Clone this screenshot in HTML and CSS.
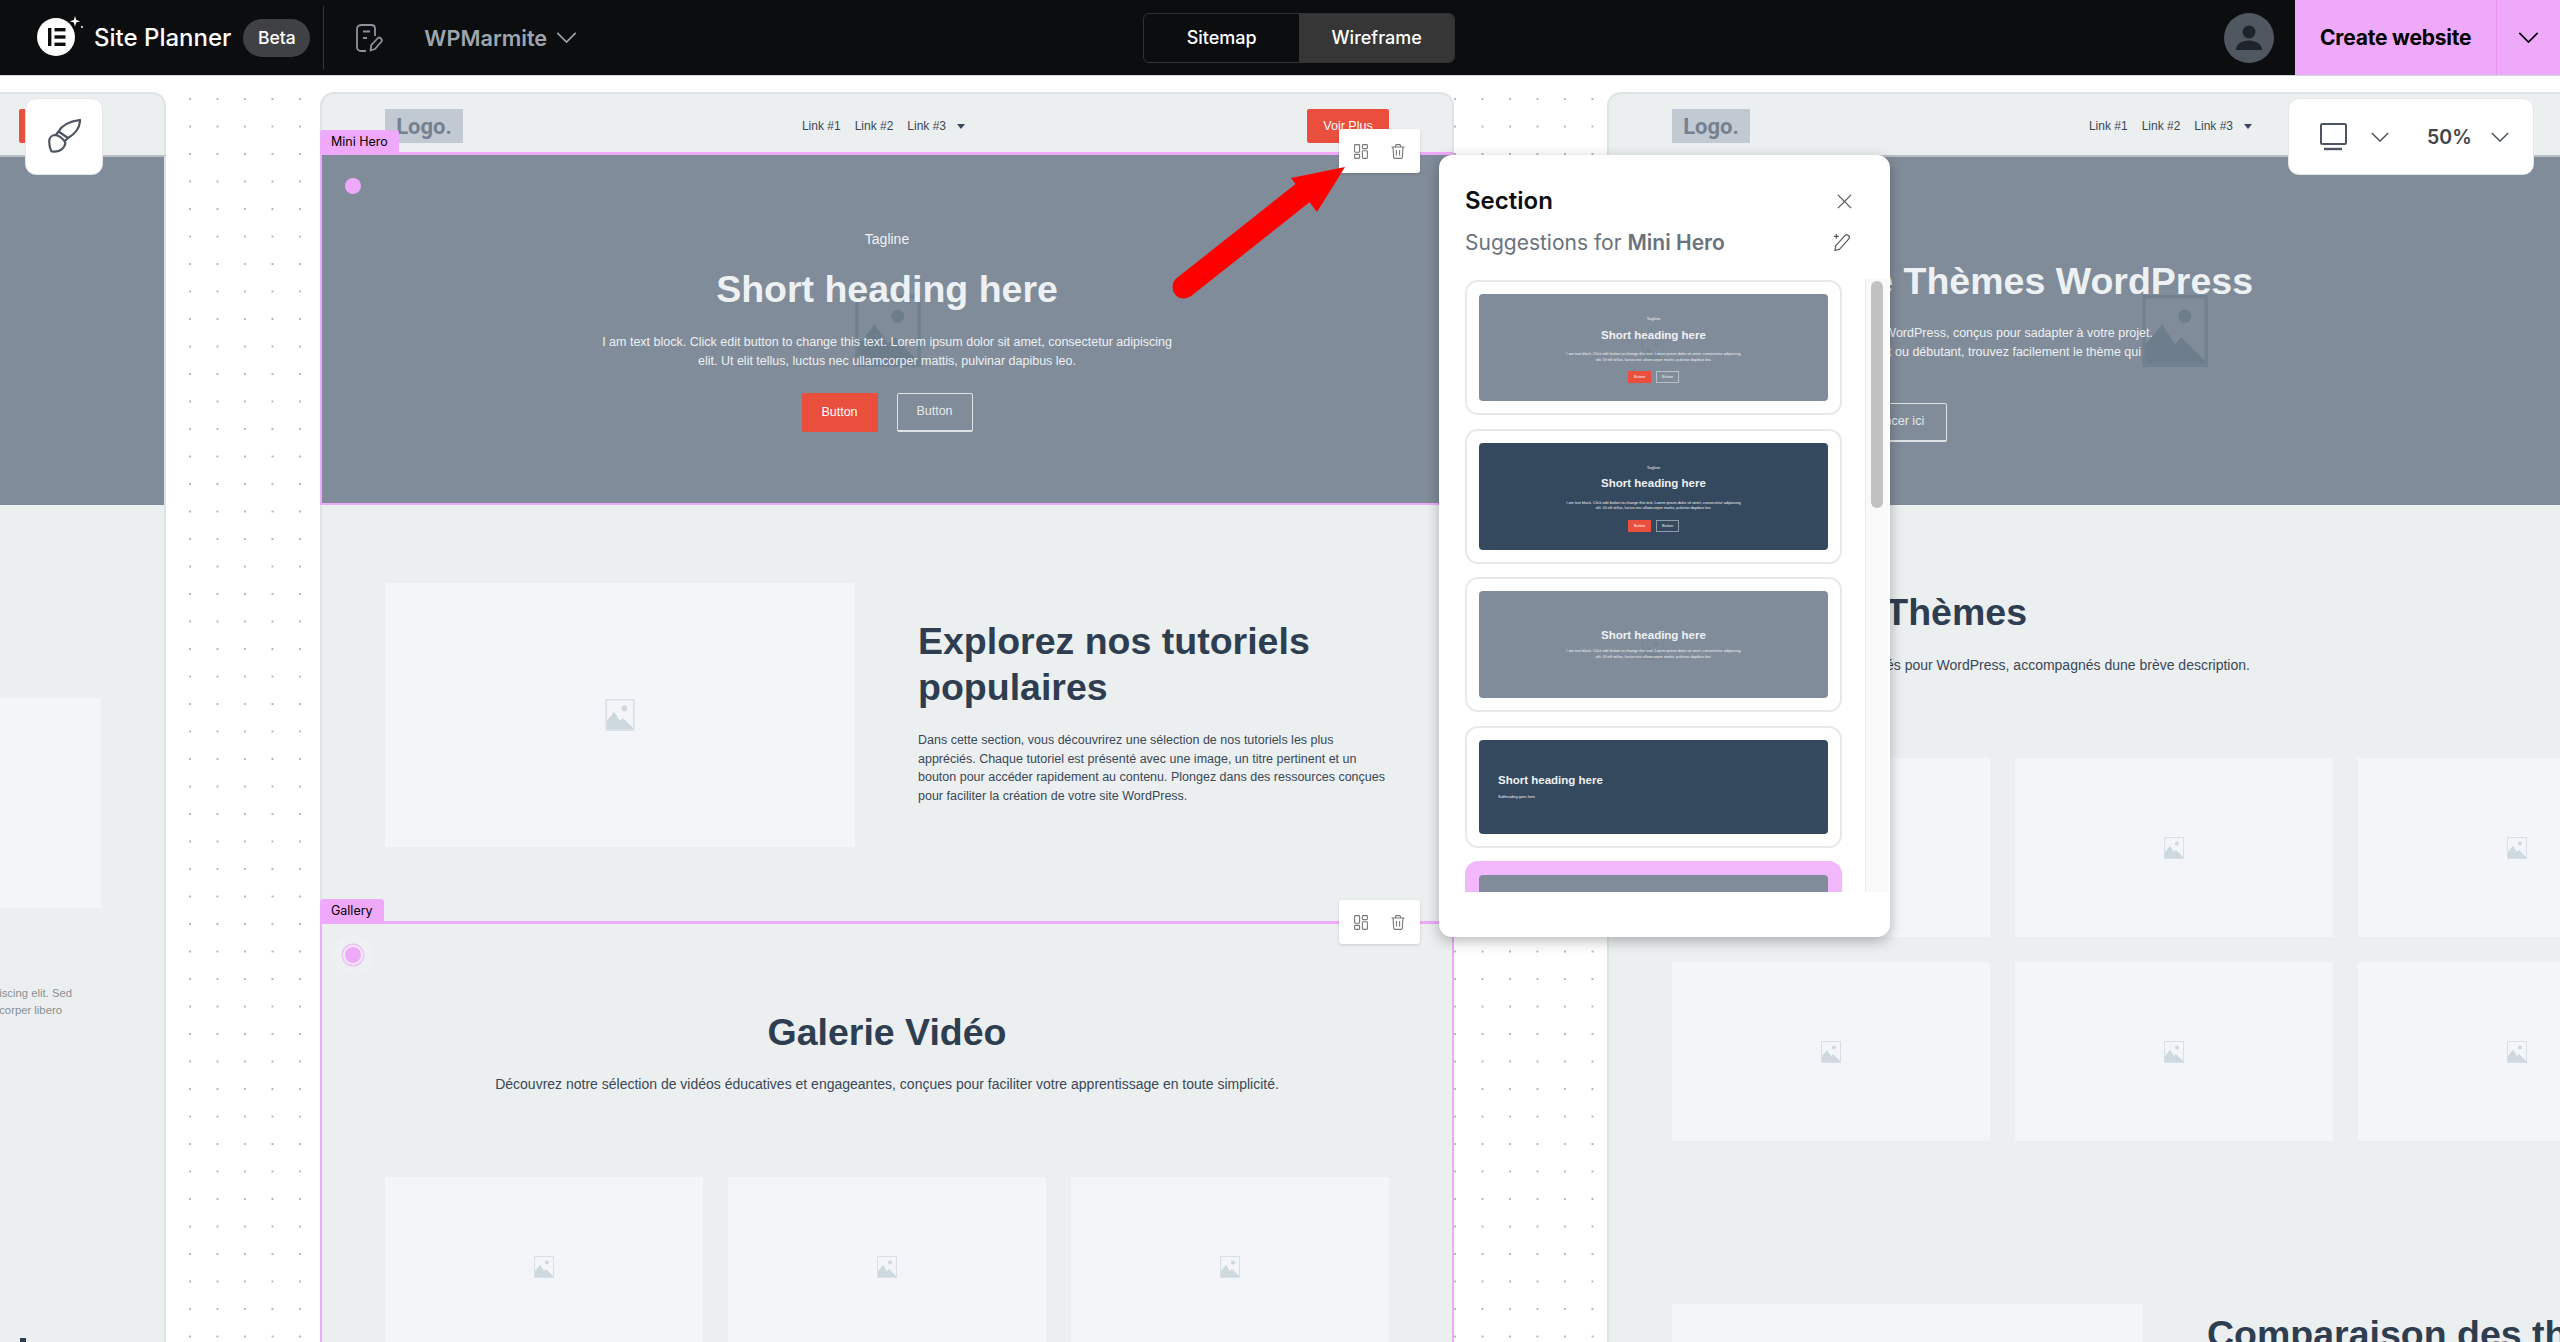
FILE: index.html
```html
<!DOCTYPE html>
<html lang="en">
<head>
<meta charset="utf-8">
<title>Site Planner</title>
<link rel="stylesheet" href="styles.css">
</head>
<body>
<svg class="sprite" aria-hidden="true">
  <symbol id="img" viewBox="0 0 20 22">
    <rect x="0.5" y="0.5" width="19" height="21" fill="none" stroke="currentColor" stroke-width="1" opacity=".75"/>
    <path d="M1 21V15L6 9l4 6 2-2 7 7v1z" fill="currentColor"/>
    <circle cx="13" cy="6.5" r="2" fill="currentColor"/>
  </symbol>
  <symbol id="chev" viewBox="0 0 22 12">
    <path d="M1 1l10 10L21 1" fill="none" stroke="currentColor" stroke-width="1.8"/>
  </symbol>
  <symbol id="grid" viewBox="0 0 14 15">
    <g fill="none" stroke="currentColor" stroke-width="1.1">
      <rect x=".6" y=".6" width="5" height="7.6" rx=".8"/><rect x="8.4" y=".6" width="5" height="4" rx=".8"/>
      <rect x=".6" y="10.4" width="5" height="4" rx=".8"/><rect x="8.4" y="6.8" width="5" height="7.6" rx=".8"/>
    </g>
  </symbol>
  <symbol id="trash" viewBox="0 0 14 15">
    <path d="M.5 3h13M4.5 3V1.6c0-.6.4-1 1-1h3c.6 0 1 .4 1 1V3M2 3l.7 10.2c0 .7.6 1.2 1.2 1.2h6.2c.7 0 1.2-.5 1.2-1.2L12 3M5.4 6v5.6M8.6 6v5.6" fill="none" stroke="currentColor" stroke-width="1.1"/>
  </symbol>
</svg>

<header class="topbar">
  <div class="brand">
    <svg class="brand-logo" viewBox="0 0 54 44" aria-hidden="true">
      <circle cx="20" cy="23" r="19" fill="#fff"/>
      <rect x="12" y="14" width="3.4" height="18" fill="#0c0d0e"/>
      <rect x="18.5" y="14" width="11" height="3.4" fill="#0c0d0e"/>
      <rect x="18.5" y="21.3" width="11" height="3.4" fill="#0c0d0e"/>
      <rect x="18.5" y="28.6" width="11" height="3.4" fill="#0c0d0e"/>
      <path d="M39 2l1.2 4 4 1.3-4 1.2L39 12.600l-1.200-4.100-4-1.200 4-1.300z" fill="#fff"/>
      <circle cx="46" cy="13" r="1" fill="#fff"/>
    </svg>
    <span class="brand-name">Site Planner</span>
    <span class="beta">Beta</span>
  </div>
  <span class="top-divider"></span>
  <svg class="doc-icon" viewBox="0 0 27 28" aria-hidden="true">
    <path d="M10 27H5.500C3 27 1 25.500 1 23.500V4.500C1 2.500 3 1 5.500 1h9.500c2.500 0 4 1.500 4 3.500V12" fill="none" stroke="currentColor" stroke-width="1.800"/>
    <path d="M7 7.500h7M7 14h4" fill="none" stroke="currentColor" stroke-width="1.800"/>
    <path d="M14.500 26.500l.8-5.500 6.700-7c1.500-1.500 5 1.500 3.500 3.500l-6.500 7.500z" fill="none" stroke="currentColor" stroke-width="1.800" stroke-linejoin="round"/>
  </svg>
  <span class="site-name">WPMarmite</span>
  <svg class="chev site-chev"><use href="#chev"/></svg>
  <div class="segmented">
    <span class="seg">Sitemap</span>
    <span class="seg seg-on">Wireframe</span>
  </div>
  <div class="avatar">
    <svg viewBox="0 0 50 50" aria-hidden="true">
      <circle cx="25" cy="19" r="6.500" fill="#1f242b"/>
      <path d="M12 37c0-6 6-9.500 13-9.500S38 31 38 37z" fill="#1f242b"/>
    </svg>
  </div>
  <div class="create">
    <span class="create-label">Create website</span>
    <span class="create-more"><svg class="chev"><use href="#chev"/></svg></span>
  </div>
</header>

<main class="canvas">
  <section class="frame frame-left">
    <div class="nav">
      <span class="logo">Logo.</span>
      <span class="links"><span>Link #1</span><span>Link #2</span><span>Link #3</span><i class="caret"></i></span>
      <span class="cta">Voir Plus</span>
    </div>
    <div class="sec hero"></div>
    <div class="sec side">
      <div class="card side-card"></div>
      <p class="side-copy"><span>Lorem ipsum dolor sit amet, consectetur adipiscing elit. Sed</span><span class="short">do eiusmod tempor ullamcorper libero</span></p>
      <i class="side-mark"></i>
    </div>
  </section>

  <section class="frame">
    <div class="nav">
      <span class="logo">Logo.</span>
      <span class="links"><span>Link #1</span><span>Link #2</span><span>Link #3</span><i class="caret"></i></span>
      <span class="cta">Voir Plus</span>
    </div>
    <div class="sec hero sel">
      <span class="sec-label">Mini Hero</span>
      <i class="sec-dot"></i>
      <svg class="hero-mark"><use href="#img"/></svg>
      <p class="tagline">Tagline</p>
      <h1 class="hero-title">Short heading here</h1>
      <p class="hero-copy">I am text block. Click edit button to change this text. Lorem ipsum dolor sit amet, consectetur adipiscing<br>elit. Ut elit tellus, luctus nec ullamcorper mattis, pulvinar dapibus leo.</p>
      <div class="hero-btns"><span class="btn btn-red">Button</span><span class="btn btn-line">Button</span></div>
    </div>
    <div class="sec split">
      <div class="card split-img"><svg class="ph ph-lg"><use href="#img"/></svg></div>
      <div class="split-text">
        <h2 class="title">Explorez nos tutoriels populaires</h2>
        <p class="copy">Dans cette section, vous découvrirez une sélection de nos tutoriels les plus appréciés. Chaque tutoriel est présenté avec une image, un titre pertinent et un bouton pour accéder rapidement au contenu. Plongez dans des ressources conçues pour faciliter la création de votre site WordPress.</p>
      </div>
    </div>
    <div class="sec gallery sel">
      <span class="sec-label">Gallery</span>
      <i class="sec-dot sec-dot-ring"></i>
      <h2 class="title gallery-title">Galerie Vidéo</h2>
      <p class="copy gallery-copy">Découvrez notre sélection de vidéos éducatives et engageantes, conçues pour faciliter votre apprentissage en toute simplicité.</p>
      <div class="cards">
        <div class="card tall"><svg class="ph"><use href="#img"/></svg></div>
        <div class="card tall"><svg class="ph"><use href="#img"/></svg></div>
        <div class="card tall"><svg class="ph"><use href="#img"/></svg></div>
      </div>
    </div>
  </section>

  <section class="frame frame-right">
    <div class="nav">
      <span class="logo">Logo.</span>
      <span class="links"><span>Link #1</span><span>Link #2</span><span>Link #3</span><i class="caret"></i></span>
      <span class="cta">Voir Plus</span>
    </div>
    <div class="sec hero hero-side">
      <svg class="hero-mark"><use href="#img"/></svg>
      <h1 class="hero-title">Guide de Thèmes WordPress</h1>
      <p class="hero-copy"><span>Découvrez des modèles pour WordPress, conçus pour sadapter à votre projet.</span><span class="pad">Que vous soyez expert ou débutant, trouvez facilement le thème qui</span></p>
      <div class="hero-btns"><span class="btn btn-line side-btn">Commencer ici</span></div>
    </div>
    <div class="sec themes">
      <h2 class="title themes-title">Meilleurs Thèmes</h2>
      <p class="copy themes-copy">Explorez la liste de thèmes proposés pour WordPress, accompagnés dune brève description.</p>
      <div class="cards cards-rows">
        <div class="card"><svg class="ph"><use href="#img"/></svg></div>
        <div class="card"><svg class="ph"><use href="#img"/></svg></div>
        <div class="card"><svg class="ph"><use href="#img"/></svg></div>
        <div class="card"><svg class="ph"><use href="#img"/></svg></div>
        <div class="card"><svg class="ph"><use href="#img"/></svg></div>
        <div class="card"><svg class="ph"><use href="#img"/></svg></div>
      </div>
      <div class="compare">
        <div class="card compare-img"></div>
        <h2 class="title compare-title">Comparaison des thèmes</h2>
      </div>
    </div>
  </section>

  <div class="float-box brush-box">
    <svg viewBox="0 0 33 34" aria-hidden="true">
      <path d="M32 1C24 2 15 5 10.500 12.500L20 19C27 15 32 9 32 1z" fill="none" stroke="currentColor" stroke-width="2.200" stroke-linejoin="round"/>
      <path d="M10.500 12.500L7.500 16.500M20 19L16.500 22.500" fill="none" stroke="currentColor" stroke-width="2.200"/>
      <path d="M7.500 16C3.500 16 1.200 19 1.200 22.500 1.200 26 2 30 3.500 32.500 8 33 12 32 14 30 17 27 18.500 24.500 16.500 22 14 19 10 16.500 7.500 16z" fill="none" stroke="currentColor" stroke-width="2.200" stroke-linejoin="round"/>
    </svg>
  </div>

  <div class="float-box view-box">
    <svg class="monitor" viewBox="0 0 27 28" aria-hidden="true">
      <rect x="1" y="1" width="25" height="20" rx="1.500" fill="none" stroke="currentColor" stroke-width="2"/>
      <path d="M4 26h18" stroke="currentColor" stroke-width="2.400"/>
    </svg>
    <svg class="chev view-chev"><use href="#chev"/></svg>
    <span class="zoom-val">50%</span>
    <svg class="chev view-chev view-chev-2"><use href="#chev"/></svg>
  </div>

  <div class="sec-tools tools-hero">
    <svg><use href="#grid"/></svg><svg><use href="#trash"/></svg>
  </div>
  <div class="sec-tools tools-gallery">
    <svg><use href="#grid"/></svg><svg><use href="#trash"/></svg>
  </div>

  <aside class="panel">
    <div class="panel-head">
      <h3 class="panel-title">Section</h3>
      <svg class="panel-close" viewBox="0 0 16 16" aria-hidden="true"><path d="M1 1l14 14M15 1L1 15" fill="none" stroke="currentColor" stroke-width="1.300"/></svg>
    </div>
    <div class="panel-sub">
      <p>Suggestions for <b>Mini Hero</b></p>
      <svg class="panel-wand" viewBox="0 0 20 20" aria-hidden="true">
        <path d="M2 18.500l.8-5L12.500 2.800c1-1.100 2.700-1.200 3.800-.2s1.100 2.700.1 3.800L7 17z" fill="none" stroke="currentColor" stroke-width="1.200" stroke-linejoin="round"/>
        <path d="M3.500 1v5M1 3.500h5" fill="none" stroke="currentColor" stroke-width="1.200"/>
      </svg>
    </div>
    <div class="panel-body">
      <div class="sugs">
        <div class="sug">
          <div class="mini">
            <svg class="mini-mark"><use href="#img"/></svg>
            <p class="mini-tag">Tagline</p>
            <p class="mini-title">Short heading here</p>
            <p class="mini-copy">I am text block. Click edit button to change this text. Lorem ipsum dolor sit amet, consectetur adipiscing<br>elit. Ut elit tellus, luctus nec ullamcorper mattis, pulvinar dapibus leo.</p>
            <div class="mini-btns"><span class="mini-btn mini-red">Button</span><span class="mini-btn mini-line">Button</span></div>
          </div>
        </div>
        <div class="sug">
          <div class="mini mini-dark">
            <p class="mini-tag">Tagline</p>
            <p class="mini-title">Short heading here</p>
            <p class="mini-copy">I am text block. Click edit button to change this text. Lorem ipsum dolor sit amet, consectetur adipiscing<br>elit. Ut elit tellus, luctus nec ullamcorper mattis, pulvinar dapibus leo.</p>
            <div class="mini-btns"><span class="mini-btn mini-red">Button</span><span class="mini-btn mini-line">Button</span></div>
          </div>
        </div>
        <div class="sug">
          <div class="mini mini-plain">
            <svg class="mini-mark"><use href="#img"/></svg>
            <p class="mini-title">Short heading here</p>
            <p class="mini-copy">I am text block. Click edit button to change this text. Lorem ipsum dolor sit amet, consectetur adipiscing<br>elit. Ut elit tellus, luctus nec ullamcorper mattis, pulvinar dapibus leo.</p>
          </div>
        </div>
        <div class="sug sug-short">
          <div class="mini mini-dark mini-left">
            <p class="mini-title">Short heading here</p>
            <p class="mini-sub">Subheading goes here</p>
          </div>
        </div>
        <div class="sug sug-on">
          <div class="mini"></div>
        </div>
      </div>
      <div class="scroll-track"><i class="scroll-thumb"></i></div>
    </div>
  </aside>

  <svg class="arrow" viewBox="0 0 220 150" aria-hidden="true">
    <path d="M24 131L144 36" stroke="#fe0000" stroke-width="23" stroke-linecap="round" fill="none"/>
    <path d="M185 11L131 22 157 56z" fill="#fe0000"/>
  </svg>
</main>
</body>
</html>
```

FILE: styles.css
```css
* { box-sizing: border-box; }
html, body { margin: 0; height: 100%; }
body {
  width: 2560px;
  height: 1342px;
  overflow: hidden;
  font-family: "Inter", "Liberation Sans", sans-serif;
  background: #fff;
}
p, h1, h2, h3 { margin: 0; }
.sprite { display: none; }
.chev { display: block; width: 21px; height: 11px; }

/* top bar */
.topbar {
  height: 76px;
  background: #0c0d0f;
  border-bottom: 1px solid #d5d8dc;
  display: flex;
  align-items: center;
  color: #fff;
}
.brand { display: flex; align-items: center; padding-left: 36px; }
.brand-logo { width: 54px; height: 44px; margin-top: -3px; }
.brand-name { font-size: 24px; font-weight: 500; margin-left: 4px; }
.beta {
  margin-left: 12px;
  width: 67px;
  height: 38px;
  border-radius: 19px;
  background: #3f4144;
  font-size: 17.5px;
  font-weight: 500;
  display: flex;
  align-items: center;
  justify-content: center;
}
.top-divider { width: 1px; height: 63px; background: #33363a; margin-left: 13px; }
.doc-icon { width: 27px; height: 28px; margin-left: 32px; color: #8b949e; }
.site-name { margin-left: 41px; font-size: 21.700px; font-weight: 600; color: #9da5ae; }
.site-chev { margin-left: 9px; color: #9da5ae; }
.segmented {
  margin-left: 566px;
  width: 312px;
  height: 50px;
  border: 1px solid #303236;
  border-radius: 6px;
  display: flex;
  overflow: hidden;
}
.seg { flex: 1; display: flex; align-items: center; justify-content: center; font-size: 18px; font-weight: 500; }
.seg-on { background: #363636; }
.avatar {
  margin-left: auto;
  width: 50px;
  height: 50px;
  border-radius: 50%;
  background: #4f5861;
}
.avatar svg { display: block; width: 50px; height: 50px; }
.create {
  margin-left: 21px;
  width: 265px;
  height: 75px;
  background: #efa9fb;
  color: #000;
  display: flex;
  align-items: center;
}
.create-label {
  width: 202px;
  height: 100%;
  padding-left: 25px;
  display: flex;
  align-items: center;
  font-size: 21px;
  font-weight: 700;
  letter-spacing: -.2px;
  border-right: 1px solid #e592f3;
}
.create-more { flex: 1; display: flex; justify-content: center; }

/* canvas */
.canvas {
  position: relative;
  height: 1266px;
  overflow: hidden;
  display: flex;
  gap: 154px;
  padding-top: 16px;
  background-color: #fff;
  background-image: radial-gradient(circle at 1px 1px, #a5a8ab 0, #a5a8ab .6px, transparent 1.1px);
  background-size: 27.5px 27.5px;
  background-position: 24px 22px;
}
.frame {
  flex: 0 0 1134px;
  width: 1134px;
  display: flex;
  flex-direction: column;
  font-family: "Liberation Sans", Arial, sans-serif;
  color: #2e3e50;
}
.frame-left { margin-left: -968px; }
.frame-right { margin-left: -1px; }

.nav {
  flex: 0 0 63px;
  background: #ebeff0;
  border: 2px solid #e0e3e5;
  border-bottom: 0;
  border-radius: 14px 14px 0 0;
  padding: 15px 63px 0;
  display: flex;
  justify-content: space-between;
  align-items: flex-start;
}
.logo {
  width: 78px;
  height: 34px;
  background: #c1c9d2;
  color: #75818e;
  font-family: "Roboto", sans-serif;
  font-weight: 700;
  font-size: 22px;
  display: flex;
  align-items: center;
  justify-content: center;
}
.links { display: flex; align-items: center; gap: 14px; font-size: 12px; height: 34px; color: #3a4756; margin-left: -3px; }
.caret { width: 0; height: 0; border: 4.5px solid transparent; border-top: 5px solid #3a4756; border-bottom: 0; margin-left: -3px; }
.cta {
  width: 82px;
  height: 34px;
  background: #ea4e3d;
  color: #fff;
  border-radius: 2px;
  font-size: 12.500px;
  display: flex;
  align-items: center;
  justify-content: center;
}

.sec {
  position: relative;
  border-left: 2px solid #e0e3e5;
  border-right: 2px solid #e0e3e5;
  background: #ebeff0;
}
.sec.sel { margin-top: -3px; border: 2px solid #efa9fb; border-top-width: 3px; }
.sec-label {
  position: absolute;
  left: -2px;
  top: -25px;
  height: 22px;
  padding: 0 11px;
  background: #efa9fb;
  border-radius: 3px 3px 0 0;
  color: #000;
  font-family: "Inter", sans-serif;
  font-size: 12.500px;
  display: flex;
  align-items: center;
}
.sec-dot {
  position: absolute;
  left: 23px;
  top: 23px;
  width: 16px;
  height: 16px;
  border-radius: 50%;
  background: #efa9fb;
}
.sec-dot-ring { box-shadow: 0 0 0 2px #ebeff0, 0 0 0 3.500px #f3c0fb, 0 0 0 12px rgba(255,255,255,.12); }

/* hero */
.hero {
  flex: 0 0 350px;
  height: 350px;
  background: #808c99;
  color: #eef1f3;
  text-align: center;
  padding-top: 71px;
  border-top: 2px solid #b9bfc5;
}
.hero.sel { flex-basis: 353px; height: 353px; padding-top: 74px; border-top-color: #efa9fb; }
.hero-mark {
  position: absolute;
  left: 531px;
  top: 140px;
  width: 70px;
  height: 72px;
  color: #6e7d8c;
}
.tagline { position: relative; font-size: 14px; line-height: 20px; }
.hero-title { position: relative; margin-top: 17px; font-size: 37.500px; line-height: 46px; font-weight: 700; }
.hero-copy { position: relative; margin-top: 21px; font-size: 12.500px; line-height: 19px; }
.hero-btns { position: relative; margin-top: 22px; display: flex; justify-content: center; gap: 19px; }
.btn { width: 76px; height: 39px; border-radius: 2px; font-size: 12.500px; display: flex; align-items: center; justify-content: center; padding-bottom: 2px; }
.btn-red { background: #ea4e3d; color: #fff; }
.btn-line { border: 1px solid #dfe3e6; border-bottom-width: 2px; color: #e6e9ec; }

.hero-side { text-align: right; padding-top: 101px; padding-left: 61px; }
.hero-side .hero-mark { top: 138px; }
.hero-side .hero-title { margin-top: 0; width: 583px; }
.hero-side .hero-copy { margin-top: 20px; width: 483px; white-space: nowrap; }
.hero-side .hero-copy span { display: block; }
.hero-side .hero-copy .pad { padding-right: 12px; }
.hero-side .hero-btns { margin-top: 41px; width: 277px; justify-content: flex-end; }
.side-btn { width: 148px; padding-left: 19px; }

/* left frame */
.side { flex: 1; padding: 193px 63px 0 0; }
.side-card { margin-left: auto; width: 318px; height: 210px; }
.side-copy {
  margin-top: 77px;
  text-align: right;
  white-space: nowrap;
  font-size: 11.300px;
  line-height: 17px;
  color: #8a8f94;
  padding-right: 29px;
}
.side-copy span { display: block; }
.side-copy .short { padding-right: 10px; }
.side-mark { position: absolute; left: 986px; bottom: 0; width: 6px; height: 4px; background: #2e3e50; }

/* cards */
.card { background: #f3f5f8; display: flex; align-items: center; justify-content: center; }
.ph { width: 20px; height: 22px; color: #cdd8df; }
.ph-lg { width: 30px; height: 32px; }

/* split */
.split { flex: 0 0 419px; padding: 78px 63px 0; display: flex; gap: 63px; align-items: flex-start; }
.split-img { flex: 0 0 470px; height: 264px; }
.split-text { padding-top: 36px; width: 470px; }
.title { font-size: 37.500px; line-height: 45.500px; font-weight: 700; color: #2e3e50; }
.copy { font-size: 12.500px; line-height: 18.500px; color: #3a4756; }
.split-text .copy { margin-top: 21px; }

/* gallery */
.gallery { flex: 1; text-align: center; padding: 85px 63px 0; }
.gallery-title { line-height: 46px; }
.gallery-copy { margin-top: 20px; font-size: 14px; line-height: 19px; }
.cards { display: grid; grid-template-columns: repeat(3, 318px); gap: 25px; margin-top: 83px; }
.tall { height: 180px; }
.cards-rows .card { height: 179px; }

/* right frame lower */
.themes { flex: 1; padding: 84px 63px 0; }
.themes-title { line-height: 46px; width: 355px; text-align: right; white-space: nowrap; }
.themes-copy { margin-top: 21px; font-size: 14px; line-height: 19px; width: 591px; white-space: nowrap; }
.compare { margin-top: 163px; display: flex; gap: 64px; white-space: nowrap; }
.compare-img { flex: 0 0 471px; height: 300px; }
.compare-title { padding-top: 8px; }

/* floating */
.float-box {
  position: absolute;
  top: 22px;
  height: 77px;
  background: #fff;
  border: 1px solid #e4e6e8;
  border-radius: 11px;
  display: flex;
  align-items: center;
  color: #4c5560;
}
.brush-box { left: 25px; width: 78px; justify-content: center; }
.brush-box svg { width: 33px; height: 34px; margin-top: -1px; }
.view-box { left: 2288px; width: 246px; padding: 0 0 0 31px; font-family: "Inter", sans-serif; }
.monitor { width: 27px; height: 28px; }
.view-chev { width: 18px; height: 10px; margin-left: 24px; }
.zoom-val { margin-left: 38px; font-size: 19.500px; font-weight: 600; color: #3f454c; }
.view-chev-2 { margin-left: 19px; }

.sec-tools {
  position: absolute;
  left: 1339px;
  width: 81px;
  height: 44px;
  background: #fff;
  border-radius: 3px;
  box-shadow: 0 1px 3px rgba(0,0,0,.15);
  display: flex;
  align-items: center;
  justify-content: center;
  gap: 23px;
  color: #777;
}
.sec-tools svg { width: 14px; height: 15px; }
.tools-hero { top: 53px; }
.tools-gallery { top: 824px; }

.arrow { position: absolute; left: 1160px; top: 80px; width: 220px; height: 150px; }

/* panel */
.panel {
  position: absolute;
  left: 1439px;
  top: 79px;
  width: 451px;
  height: 782px;
  background: #fff;
  border-radius: 13px;
  box-shadow: 0 4px 14px rgba(0,0,0,.28);
  padding: 31px 0 0 26px;
  font-family: "Inter", sans-serif;
}
.panel-head { display: flex; align-items: center; justify-content: space-between; height: 30px; padding-right: 38px; }
.panel-title { font-size: 24px; font-weight: 600; color: #0c0d0e; line-height: 30px; }
.panel-close { width: 15px; height: 15px; color: #555; }
.panel-sub { margin-top: 12px; height: 28px; display: flex; align-items: center; justify-content: space-between; padding-right: 38px; color: #69727d; font-size: 21px; }
.panel-sub b { font-weight: 600; }
.panel-wand { width: 19px; height: 19px; color: #555; }
.panel-body { margin-top: 23px; height: 613px; display: flex; overflow: hidden; }
.sugs { flex: 0 0 377px; display: flex; flex-direction: column; gap: 13.500px; padding-top: 1px; }
.sug {
  flex: 0 0 135px;
  border: 2px solid #e6e8ea;
  border-radius: 13px;
  padding: 12px;
}
.sug-short { flex-basis: 122px; }
.sug-on { background: #f2b8fb; border-color: #f2b8fb; }
.scroll-track {
  margin-left: 23px;
  width: 23px;
  background: #f9f9f9;
  border-left: 1px solid #e8e8e8;
  padding: 2px 0 0 5px;
}
.scroll-thumb { display: block; width: 12px; height: 227px; border-radius: 6px; background: #c1c1c1; }

.mini {
  position: relative;
  height: 100%;
  background: #808c99;
  border-radius: 4px;
  color: #eef1f3;
  font-family: "Liberation Sans", Arial, sans-serif;
  text-align: center;
  padding-top: 22px;
}
.mini-dark { background: #34495e; }
.mini-mark { position: absolute; left: 163px; top: 44px; width: 22px; height: 23px; color: #788694; }
.mini-tag { position: relative; font-size: 4.300px; line-height: 6px; }
.mini-title { position: relative; margin-top: 5.500px; font-size: 11.500px; line-height: 15px; font-weight: 700; }
.mini-copy { position: relative; margin-top: 9.600px; font-size: 3.830px; line-height: 5.700px; }
.mini-btns { position: relative; margin-top: 7.500px; display: flex; justify-content: center; gap: 5px; }
.mini-btn { width: 23px; height: 12px; font-size: 3.830px; display: flex; align-items: center; justify-content: center; }
.mini-red { background: #ea4e3d; color: #fff; }
.mini-line { border: 1px solid rgba(255,255,255,.45); }
.mini-plain { padding-top: 37px; }
.mini-plain .mini-title { margin-top: 0; }
.mini-plain .mini-copy { margin-top: 6px; }
.mini-plain .mini-mark { top: 46px; }
.mini-left { text-align: left; padding: 33.500px 0 0 19px; }
.mini-left .mini-title { margin-top: 0; }
.mini-sub { margin-top: 6px; font-size: 3.700px; line-height: 6px; }
```
